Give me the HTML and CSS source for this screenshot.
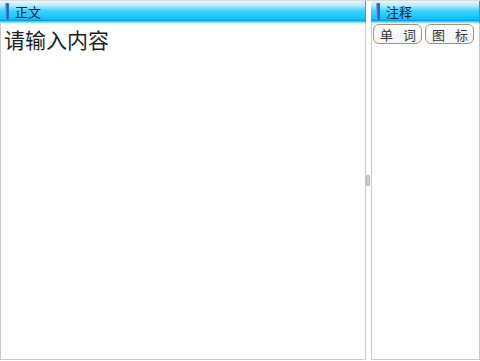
FILE: index.html
```html
<!DOCTYPE html>
<html>
  <head>
    <title>正文</title>
    <link rel="stylesheet" href="styles.css">
  </head>
  <body>
    <div class="layout">
      <div class="panel mainPanel">
        <div class="titleBar"><span class="accent"></span><span class="titleText">正文</span></div>
        <div class="content">
          <div class="placeholder">请输入内容</div>
        </div>
      </div>

      <div class="splitter"><div class="grip"></div></div>

      <div class="panel sidePanel">
        <div class="titleBar"><span class="accent"></span><span class="titleText">注释</span></div>
        <div class="tabs">
          <button class="tab"><span>单</span><span>词</span></button>
          <button class="tab"><span>图</span><span>标</span></button>
        </div>
        <div class="content"></div>
      </div>
    </div>
  </body>
</html>
```

FILE: styles.css
```css
html, body {
  margin: 0;
  height: 100%;
  background: #ffffff;
  font-family: "Liberation Sans", "Noto Sans CJK SC", sans-serif;
}

.layout {
  display: flex;
  height: 361px;
  box-sizing: border-box;
  border-top: 1px solid #dcdcdc;
  padding-bottom: 1px;
}

.panel {
  display: flex;
  flex-direction: column;
}

.mainPanel {
  width: 366px;
}

.sidePanel {
  flex: 1;
  padding-left: 1px;
}

.titleBar {
  height: 22px;
  box-sizing: border-box;
  display: flex;
  align-items: center;
  background: linear-gradient(#e6f8fe 0%, #b8ecfc 20%, #3fd0fd 45%, #0fc4fb 80%, #1aa0e8 88%, #0e7fd0 91%, #6fdcff 94%, #8de6ff 100%);
  border-right: 1px solid #4a90c8;
}

.accent {
  width: 4px;
  height: 17px;
  margin-left: 5px;
  margin-top: -1px;
  border-radius: 1px;
  background: linear-gradient(to right, #7fb8e6, #1c63b4 60%, #2a78c8);
}

.titleText {
  margin-left: 6px;
  margin-top: -1px;
  font-family: "Noto Sans CJK SC", sans-serif;
  font-size: 13px;
  color: #08223f;
}

.content {
  flex: 1;
  border: 1px solid #c9c9c9;
  border-top: none;
  background: #ffffff;
}

.placeholder {
  padding: 2px 0 0 3px;
  font-family: "Noto Sans CJK SC", sans-serif;
  font-size: 21px;
  line-height: 28px;
  color: #1e1e1e;
}

.splitter {
  width: 4px;
  display: flex;
  align-items: center;
  justify-content: center;
}

.grip {
  width: 3px;
  height: 9px;
  background: #cfcfcf;
  border: 1px solid #b8b8b8;
  border-radius: 1px;
}

.tabs {
  display: flex;
  gap: 3px;
  padding: 1px 5px 1px 1px;
  border-left: 1px solid #c9c9c9;
  border-right: 1px solid #c9c9c9;
}

.tab {
  flex: 1;
  height: 20px;
  padding: 0 5px 0 6px;
  display: flex;
  align-items: center;
  justify-content: space-between;
  font-family: "Noto Sans CJK SC", sans-serif;
  font-size: 13px;
  color: #333333;
  background: linear-gradient(#ffffff, #f4f4f4);
  border: 1px solid #b48c68;
  border-radius: 6px;
}
```
